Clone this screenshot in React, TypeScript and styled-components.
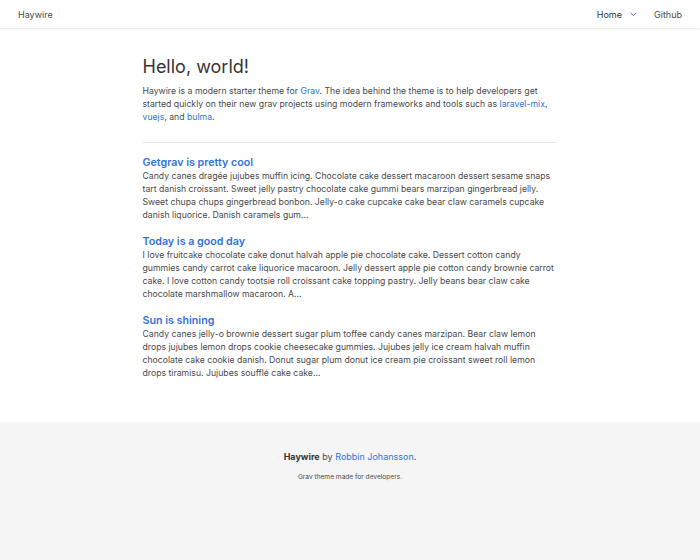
import React from "react";
import styled, { createGlobalStyle } from "styled-components";

const Global = createGlobalStyle`
  html, body { margin: 0; padding: 0; background: #fff; }
  body {
    font-family: Inter, "Noto Sans", "Liberation Sans", sans-serif;
    color: #4a4a4a;
    -webkit-font-smoothing: antialiased;
  }
  * { box-sizing: border-box; }
`;

const Page = styled.div`
  display: flex;
  flex-direction: column;
  min-height: 560px;
`;

const Navbar = styled.nav`
  height: 28px;
  display: flex;
  align-items: center;
  justify-content: space-between;
  padding: 0 18px;
  background: #fff;
  box-shadow: 0 1px 1.5px rgba(10, 10, 10, 0.1);
  font-size: 9px;
`;

const Brand = styled.a`
  color: #4a4a4a;
  text-decoration: none;
`;

const NavMenu = styled.div`
  display: flex;
  align-items: center;
  gap: 17px;
`;

const NavItem = styled.a<{ $active?: boolean }>`
  display: flex;
  align-items: center;
  gap: 8px;
  color: ${(p) => (p.$active ? "#363636" : "#4a4a4a")};
  text-decoration: none;
`;

const Main = styled.main`
  flex: 1;
  display: flex;
  justify-content: center;
  padding: 27px 0 27px;
`;

const Container = styled.div`
  width: 415px;
`;

const Title = styled.h1`
  margin: 0 0 6px;
  font-size: 18px;
  font-weight: 400;
  color: #363636;
  line-height: 24px;
`;

const Text = styled.p`
  margin: 0;
  font-size: 8.7px;
  line-height: 13px;
  color: #4a4a4a;
`;

const Link = styled.a`
  color: #3273dc;
  text-decoration: none;
`;

const Rule = styled.hr`
  border: none;
  height: 1px;
  background: #e8e8e8;
  margin: 18px 0 13px;
`;

const Post = styled.article`
  margin-bottom: 13px;
`;

const PostTitle = styled.a`
  display: block;
  font-size: 10.7px;
  font-weight: 600;
  line-height: 14px;
  color: #3273dc;
  text-decoration: none;
`;

const Footer = styled.footer`
  height: 138px;
  background: #f5f5f5;
  display: flex;
  flex-direction: column;
  align-items: center;
  padding-top: 29px;
`;

const FooterLine = styled.p`
  margin: 0;
  font-size: 9px;
  line-height: 12px;
  color: #4a4a4a;
`;

const Strong = styled.strong`
  color: #363636;
  font-weight: 700;
`;

const FooterSmall = styled.p`
  margin: 10px 0 0;
  font-size: 6.6px;
  line-height: 9px;
  color: #4a4a4a;
`;

const Chevron = () => (
  <svg width="7" height="5" viewBox="0 0 7 5" fill="none">
    <path d="M0.6 0.8 L3.5 3.7 L6.4 0.8" stroke="#3273dc" strokeWidth="0.9" />
  </svg>
);

const posts = [
  {
    title: "Getgrav is pretty cool",
    body: "Candy canes dragée jujubes muffin icing. Chocolate cake dessert macaroon dessert sesame snaps tart danish croissant. Sweet jelly pastry chocolate cake gummi bears marzipan gingerbread jelly. Sweet chupa chups gingerbread bonbon. Jelly-o cake cupcake cake bear claw caramels cupcake danish liquorice. Danish caramels gum...",
  },
  {
    title: "Today is a good day",
    body: "I love fruitcake chocolate cake donut halvah apple pie chocolate cake. Dessert cotton candy gummies candy carrot cake liquorice macaroon. Jelly dessert apple pie cotton candy brownie carrot cake. I love cotton candy tootsie roll croissant cake topping pastry. Jelly beans bear claw cake chocolate marshmallow macaroon. A...",
  },
  {
    title: "Sun is shining",
    body: "Candy canes jelly-o brownie dessert sugar plum toffee candy canes marzipan. Bear claw lemon drops jujubes lemon drops cookie cheesecake gummies. Jujubes jelly ice cream halvah muffin chocolate cake cookie danish. Donut sugar plum donut ice cream pie croissant sweet roll lemon drops tiramisu. Jujubes soufflé cake cake...",
  },
];

export default function App() {
  return (
    <Page>
      <Global />
      <Navbar>
        <Brand href="#">Haywire</Brand>
        <NavMenu>
          <NavItem href="#" $active>
            Home <Chevron />
          </NavItem>
          <NavItem href="#">Github</NavItem>
        </NavMenu>
      </Navbar>
      <Main>
        <Container>
          <Title>Hello, world!</Title>
          <Text>
            Haywire is a modern starter theme for <Link href="#">Grav</Link>. The idea behind the theme is to help
            developers get started quickly on their new grav projects using modern frameworks and tools such as{" "}
            <Link href="#">laravel-mix</Link>, <Link href="#">vuejs</Link>, and <Link href="#">bulma</Link>.
          </Text>
          <Rule />
          {posts.map((p) => (
            <Post key={p.title}>
              <PostTitle href="#">{p.title}</PostTitle>
              <Text>{p.body}</Text>
            </Post>
          ))}
        </Container>
      </Main>
      <Footer>
        <FooterLine>
          <Strong>Haywire</Strong> by <Link href="#">Robbin Johansson</Link>.
        </FooterLine>
        <FooterSmall>Grav theme made for developers.</FooterSmall>
      </Footer>
    </Page>
  );
}
